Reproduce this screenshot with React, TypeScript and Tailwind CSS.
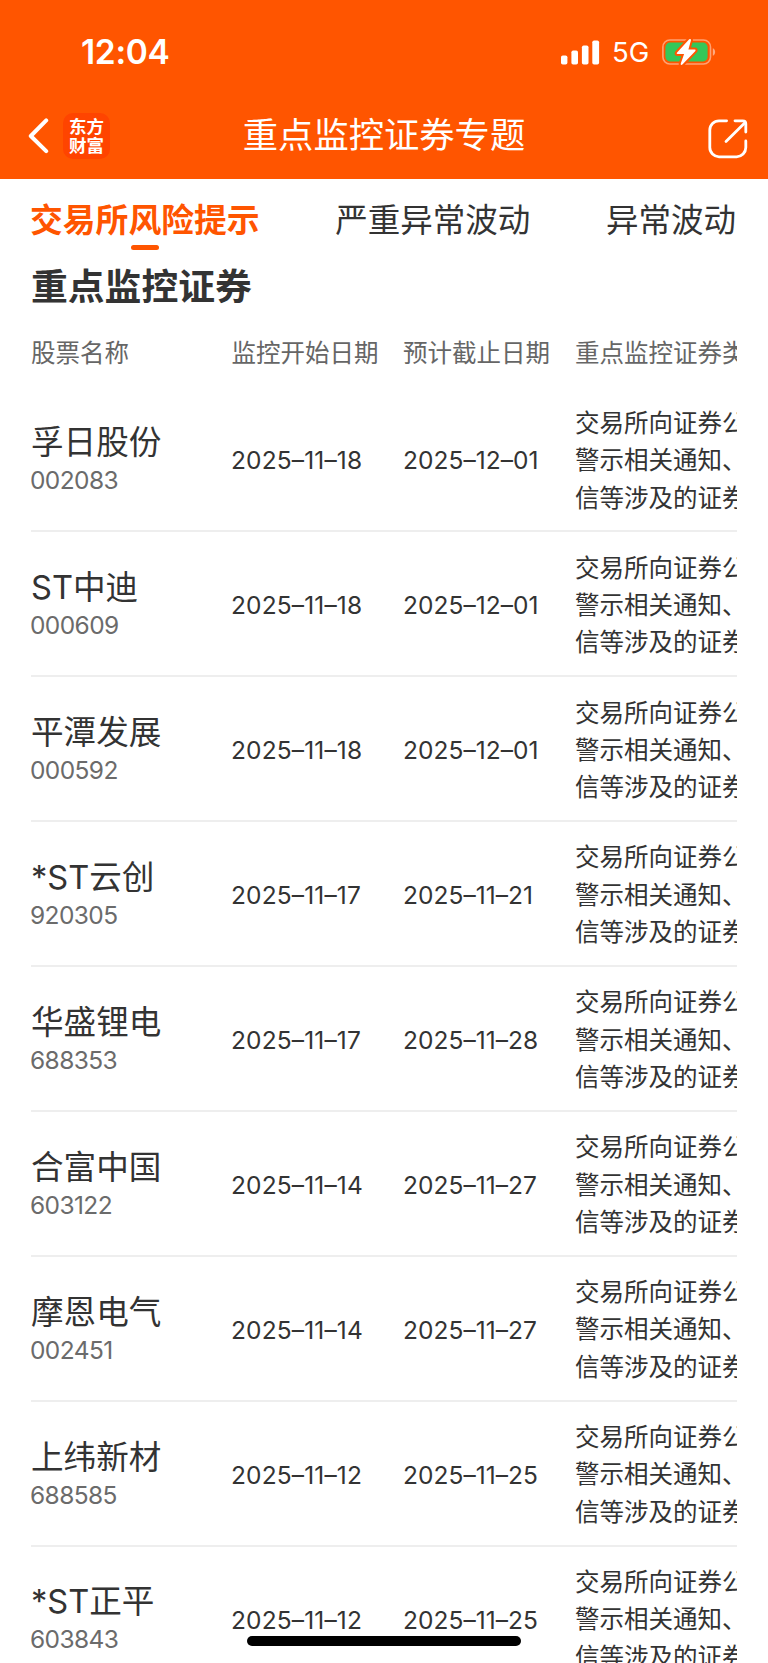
import * as React from "react";

interface Stock {
  name: string;
  code: string;
  start: string;
  end: string;
}

const tabs = ["交易所风险提示", "严重异常波动", "异常波动"];

const stocks: Stock[] = [
  { name: "孚日股份", code: "002083", start: "2025–11–18", end: "2025–12–01" },
  { name: "ST中迪", code: "000609", start: "2025–11–18", end: "2025–12–01" },
  { name: "平潭发展", code: "000592", start: "2025–11–18", end: "2025–12–01" },
  { name: "*ST云创", code: "920305", start: "2025–11–17", end: "2025–11–21" },
  { name: "华盛锂电", code: "688353", start: "2025–11–17", end: "2025–11–28" },
  { name: "合富中国", code: "603122", start: "2025–11–14", end: "2025–11–27" },
  { name: "摩恩电气", code: "002451", start: "2025–11–14", end: "2025–11–27" },
  { name: "上纬新材", code: "688585", start: "2025–11–12", end: "2025–11–25" },
  { name: "*ST正平", code: "603843", start: "2025–11–12", end: "2025–11–25" },
];

const reasonLines = ["交易所向证券公", "警示相关通知、", "信等涉及的证券"];

function SignalIcon() {
  return (
    <svg width="39" height="25" viewBox="0 0 39 25" fill="#fff">
      <rect x="0" y="15.5" width="6.4" height="9" rx="1.8" />
      <rect x="10.4" y="10.5" width="6.6" height="14" rx="1.8" />
      <rect x="20.9" y="5.5" width="6.6" height="19" rx="1.8" />
      <rect x="31.3" y="0.4" width="6.8" height="24.1" rx="1.8" />
    </svg>
  );
}

function BatteryIcon() {
  return (
    <svg width="55" height="28" viewBox="0 0 55 28" fill="none">
      <rect x="0.9" y="2" width="47.6" height="24" rx="7" stroke="#fff" strokeOpacity="0.45" strokeWidth="1.6" />
      <path d="M50.8 10.2c3.1 1.1 3.1 6.5 0 7.6z" fill="#fff" fillOpacity="0.5" />
      <rect x="3.4" y="4.6" width="42.2" height="18.8" rx="4.6" fill="#34c759" />
      <path
        d="M27.2 1.2 14.9 14.7q-.8 1.4.8 1.4h6.4l-3.4 9.6q-.1 1.9 1.7.9L33.4 12.9q.8-1.4-.8-1.4h-6.2l2.6-9.2q0-1.9-1.8-1.1z"
        fill="#fff"
        stroke="#ff5500"
        strokeWidth="4"
        paintOrder="stroke"
      />
    </svg>
  );
}

function ShareIcon() {
  return (
    <svg width="40" height="40" viewBox="0 0 40 40" fill="none" stroke="#fff" strokeWidth="2.8" strokeLinecap="round" strokeLinejoin="round">
      <path d="M18.6 1.8H11A9.2 9.2 0 0 0 1.8 11V28.6A9.2 9.2 0 0 0 11 37.8H28.6A9.2 9.2 0 0 0 37.8 28.6V22" />
      <path d="M27 1.8H34.8Q37.8 1.8 37.8 4.8V13" />
      <path d="M18 22.6 36.4 4.2" />
    </svg>
  );
}

function Header() {
  return (
    <header className="h-[179px] shrink-0 bg-[#ff5500] text-white">
      <div className="flex h-[94px] items-start justify-between pl-[81px] pr-[51px] pt-[38px]">
        <span className="text-[33.5px] font-semibold leading-[29px] tracking-[-0.3px]">12:04</span>
        <div className="flex items-center">
          <SignalIcon />
          <span className="ml-[12px] w-[50px] text-[27.5px] leading-[28px]">5G</span>
          <BatteryIcon />
        </div>
      </div>
      <div className="grid h-[84px] grid-cols-[1fr_auto_1fr] items-center pl-[28px] pr-[20px]">
        <div className="flex items-center">
          <svg width="21" height="36" viewBox="0 0 21 36" fill="none" stroke="#fff" strokeWidth="4" strokeLinecap="round" strokeLinejoin="round">
            <path d="M18.2 2.4 2.8 18 18.2 33.2" />
          </svg>
          <div className="ml-[14px] flex h-[46px] w-[47px] flex-col items-center justify-center rounded-[10px] bg-[#ff4400] text-[17.5px] font-bold leading-[19px]">
            <span>东方</span>
            <span>财富</span>
          </div>
        </div>
        <h1 className="mr-[8px] text-[35.3px] leading-[40px]">重点监控证券专题</h1>
        <div className="flex justify-end pt-[5px]">
          <ShareIcon />
        </div>
      </div>
    </header>
  );
}

export default function App() {
  return (
    <div className="relative flex h-[1663px] w-[768px] flex-col overflow-hidden bg-white font-['Inter','Noto_Sans_CJK_SC',sans-serif] text-[#333333]">
      <Header />

      <nav className="flex h-[72px] shrink-0 justify-between pl-[30px] pr-[32px] pt-[21px]">
        {tabs.map((tab, index) => (
          <div key={tab} className="flex flex-col items-center">
            <span
              className={
                index === 0
                  ? "text-[32.8px] font-bold leading-[40px] text-[#ff5500]"
                  : "pt-px text-[32.5px] leading-[40px]"
              }
            >
              {tab}
            </span>
            {index === 0 && <span className="mt-[5px] h-[5px] w-[28px] rounded-full bg-[#ff5500]" />}
          </div>
        ))}
      </nav>

      <main className="ml-[31px] w-[706px] overflow-hidden">
        <h2 className="h-[70px] pt-[13px] text-[36.8px] font-bold leading-[46px]">重点监控证券</h2>

        <div className="flex h-[66.4px] whitespace-nowrap pt-[14px] text-[24.5px] leading-[36px] text-[#666666]">
          <span className="w-[200.5px] shrink-0">股票名称</span>
          <span className="w-[171.5px] shrink-0">监控开始日期</span>
          <span className="w-[172px] shrink-0">预计截止日期</span>
          <span className="shrink-0">重点监控证券类型</span>
        </div>

        {stocks.map((stock) => (
          <div key={stock.code} className="flex h-[144.9px] items-center whitespace-nowrap border-b-2 border-[#eeeeee] pt-[4px] text-[24.5px]">
            <div className="w-[200px] shrink-0 pb-[3px]">
              <div className="text-[32.6px] leading-[42px]">{stock.name}</div>
              <div className="-ml-px leading-[34px] tracking-[-0.6px] text-[#6b6b6b]">{stock.code}</div>
            </div>
            <div className="w-[172px] shrink-0 tracking-[0.15px]">{stock.start}</div>
            <div className="w-[172px] shrink-0 tracking-[0.05px]">{stock.end}</div>
            <div className="shrink-0 leading-[37.4px]">
              {reasonLines.map((line) => (
                <div key={line}>{line}</div>
              ))}
            </div>
          </div>
        ))}
      </main>

      {/* Home indicator */}
      <div className="absolute bottom-[17px] left-[247px] h-[10px] w-[274px] rounded-full bg-black" />
    </div>
  );
}
